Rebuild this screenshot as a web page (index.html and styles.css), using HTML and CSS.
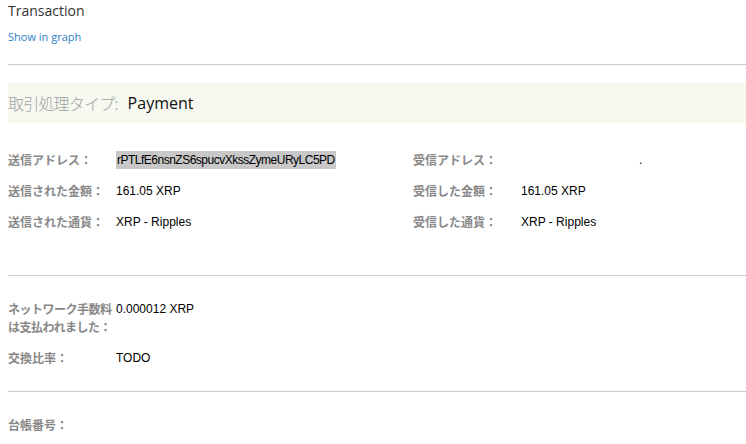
FILE: index.html
```html
<!DOCTYPE html>
<html lang="ja">
<head>
<meta charset="utf-8">
<link rel="stylesheet" href="styles.css">
</head>
<body>
<div class="page">
  <h1 class="title">Transaction</h1>
  <a class="graph-link" href="#">Show in graph</a>
  <hr class="rule rule-top">
  <div class="type-box">
    <span class="type-label">取引処理タイプ:</span>
    <span class="type-value">Payment</span>
  </div>
  <div class="pairs">
    <div class="label">送信アドレス：</div>
    <div class="value"><span class="selected">rPTLfE6nsnZS6spucvXkssZymeURyLC5PD</span></div>
    <div class="label">受信アドレス：</div>
    <div class="value"><span class="dot-value">.</span></div>

    <div class="label">送信された金額：</div>
    <div class="value">161.05 XRP</div>
    <div class="label">受信した金額：</div>
    <div class="value">161.05 XRP</div>

    <div class="label">送信された通貨：</div>
    <div class="value">XRP - Ripples</div>
    <div class="label">受信した通貨：</div>
    <div class="value">XRP - Ripples</div>
  </div>
  <hr class="rule rule-mid">
  <div class="pairs single">
    <div class="label wrap">ネットワーク手数料は支払われました：</div>
    <div class="value">0.000012 XRP</div>
    <div class="label">交換比率：</div>
    <div class="value">TODO</div>
  </div>
  <hr class="rule rule-low">
  <div class="pairs single">
    <div class="label">台帳番号：</div>
    <div class="value"></div>
  </div>
</div>
</body>
</html>
```
FILE: styles.css
```css
html, body {
  margin: 0;
  padding: 0;
  background: #ffffff;
}
.page {
  padding: 0 0 0 8px;
  font-family: "Liberation Sans", "Noto Sans CJK JP", sans-serif;
  font-size: 12px;
  color: #000;
}
.title {
  margin: 0;
  padding-top: 1px;
  font-family: "Open Sans", "Noto Sans CJK JP", sans-serif;
  font-weight: normal;
  font-size: 14px;
  line-height: 19px;
  color: #333;
}
.graph-link {
  display: block;
  margin-top: 9px;
  font-family: "Open Sans", sans-serif;
  font-size: 11px;
  line-height: 15px;
  color: #2a7ec8;
  text-decoration: none;
}
.rule {
  border: 0;
  border-top: 1px solid #cccccc;
  margin: 0;
}
.rule-top { margin-top: 20px; }
.type-box {
  margin-top: 18px;
  height: 40px;
  background: #f7f9f1;
  display: flex;
  align-items: center;
  font-size: 16px;
}
.type-label {
  font-family: "Noto Sans CJK JP", sans-serif;
  font-weight: 300;
  color: #a0a0a0;
  margin-right: 10px;
  letter-spacing: -0.8px;
}
.type-value {
  font-family: "Open Sans", sans-serif;
  color: #111;
}
.pairs {
  display: grid;
  grid-template-columns: 108px 297px 108px 1fr;
  margin-top: 28px;
  row-gap: 13px;
  line-height: 18px;
}
.pairs.single {
  grid-template-columns: 108px 1fr;
  margin-top: 24px;
}
.label {
  font-family: "Noto Sans CJK JP", sans-serif;
  font-weight: bold;
  font-size: 12px;
  color: #888;
}
.label.wrap {
  word-break: break-all;
  letter-spacing: -0.5px;
}
.value {
  font-size: 12px;
  color: #000;
}
.selected {
  background: #c8c8c8;
  padding: 2px 1px;
  letter-spacing: -0.5px;
}
.dot-value {
  margin-left: 118px;
}
.rule-mid { margin-top: 44px; }
.rule-low { margin-top: 24px; }
```
